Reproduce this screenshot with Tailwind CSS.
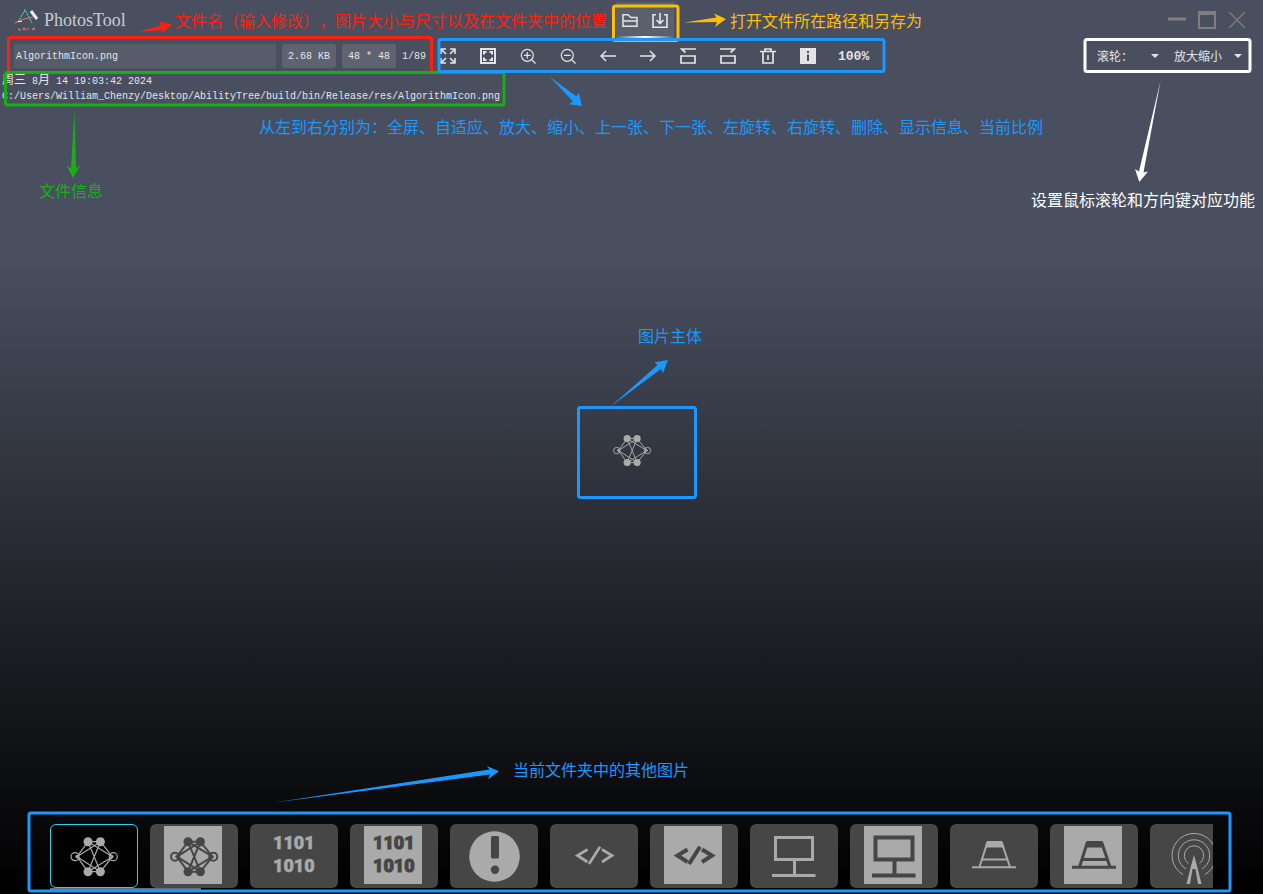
<!DOCTYPE html>
<html lang="zh-CN">
<head>
<meta charset="utf-8">
<meta name="viewport" content="width=device-width, initial-scale=1">
<title>PhotosTool</title>
<script src="https://cdn.jsdelivr.net/npm/@tailwindcss/browser@4"></script>
</head>
<body class="relative flex min-h-screen flex-col overflow-hidden bg-linear-to-b/srgb from-[#494f5f] from-29% via-[#1a1b20] via-75% to-black to-100% font-['Liberation_Mono','Noto_Sans_CJK_SC',monospace] text-[10px] text-[#e4e4e4]">

<svg class="hidden" aria-hidden="true">
  <defs>
    <g id="network">
      <g fill="none" stroke="currentColor">
        <path d="M13 30.7 24 15.7 36.4 45.7M13 30.7 36.4 15.7 24 45.7ZM13 30.7 36.4 45.7 48.5 30.7 36.4 15.7M48.5 30.7 24 15.7H36.4M48.5 30.7 24 45.7H36.4"/>
        <circle cx="11" cy="30.7" r="4"/><circle cx="49.3" cy="30.7" r="4"/>
      </g>
      <g fill="currentColor" stroke="none"><circle cx="24" cy="15.7" r="4.5"/><circle cx="36.4" cy="15.7" r="4.5"/><circle cx="24" cy="45.7" r="4.5"/><circle cx="36.4" cy="45.7" r="4.5"/><circle cx="13" cy="30.7" r="1.6"/><circle cx="48" cy="30.7" r="1.6"/></g>
    </g>
    <g id="code" fill="none" stroke="currentColor"><path d="M23.5 23.5 13.5 29.5 23.5 36M36 20.7 25 38M38 23.5 48 29.5 38 36"/></g>
    <g id="monitor" fill="none" stroke="currentColor"><path d="M11.5 11.5H48.5V33.5H11.5ZM30.5 34V49M8 49.5H51.5"/></g>
    <g id="track" fill="none" stroke="currentColor"><path d="M23.5 16 15.5 41M37.5 16 46 41M18 33.5H43.5M8 41.3H52"/><path fill="currentColor" stroke="none" d="M23 15H38L40.5 21.5H21Z"/></g>
  </defs>
</svg>

<header class="flex h-10 shrink-0 items-center">
  <div class="flex w-[616px] items-center gap-[5px] pl-[15px]">
    <svg class="h-6 w-6" viewBox="0 0 24 24" fill="none" aria-hidden="true">
      <path d="M3 14 10 2 17 15" stroke="#45d0b8" stroke-width="1.2" stroke-dasharray="2 1"/>
      <path d="M0 15 9 11 18 9" stroke="#e86a6a" stroke-width="1.2"/>
      <path d="M16 3 22 11" stroke="#ececec" stroke-width="3"/>
      <path d="M3 13.5H7" stroke="#ececec"/>
      <path d="M4 20V22H6M8 22 9 20 11 22M13 20V22M17 22 19 20 20 22" stroke="#e86a6a" stroke-width="1.2"/>
    </svg>
    <h1 class="font-['Liberation_Serif',serif] text-lg text-[#c9cbd0]">PhotosTool</h1>
  </div>
  <div class="relative flex h-9 w-[58px] items-center gap-[14px] bg-[#5b606e] px-[6px] pt-[2px]">
    <button aria-label="打开文件所在路径"><svg class="h-4 w-4" viewBox="0 0 16 16" fill="none" stroke="#e4e4e4" stroke-width="1.5"><path d="M1 13.3V1.8H6L9 4.5H15V13.3ZM1 8H15"/></svg></button>
    <button aria-label="另存为"><svg class="h-4 w-4" viewBox="0 0 16 16" fill="none" stroke="#e4e4e4" stroke-width="1.6"><path d="M4 1.8H1V14.2H15V1.8H12M8 0V10M4.5 7 8 10.5 11.5 7"/></svg></button>
    <div class="absolute inset-x-0 bottom-0 h-[2px] bg-linear-to-r from-transparent via-white to-transparent"></div>
  </div>
  <div class="ml-auto flex pr-[11px] text-[#807f7d]">
    <button class="grid w-[30px] place-items-center" aria-label="最小化"><svg class="h-[18px] w-[18px]" viewBox="0 0 18 18" stroke="currentColor" stroke-width="3"><path d="M0 8H18"/></svg></button>
    <button class="grid w-[30px] place-items-center" aria-label="最大化"><svg class="h-[18px] w-[18px]" viewBox="0 0 18 18" fill="none" stroke="currentColor" stroke-width="2"><path d="M1 1H17V17H1ZM1 3H17"/></svg></button>
    <button class="grid w-[30px] place-items-center" aria-label="关闭"><svg class="h-[18px] w-[18px]" viewBox="0 0 18 18" stroke="currentColor" stroke-width="1.3"><path d="M1 1 17 17M17 1 1 17"/></svg></button>
  </div>
</header>

<div class="flex h-8 shrink-0 items-center pl-[14px]">
  <div class="flex w-[414px] items-center gap-[6px]">
    <input class="h-6 w-[262px] bg-[#575c6a] px-[2px] text-[10px] outline-none" aria-label="文件名" value="AlgorithmIcon.png">
    <span class="grid h-6 w-[54px] place-items-center rounded-[3px] bg-[#5f6371]">2.68 KB</span>
    <span class="grid h-6 w-[54px] place-items-center rounded-[3px] bg-[#5f6371]">48 * 48</span>
    <span>1/89</span>
  </div>
  <nav class="flex items-center">
    <button class="grid w-10 place-items-center" aria-label="全屏"><svg class="h-4 w-4" viewBox="0 0 16 16" fill="none" stroke="currentColor" stroke-width="1.6"><path d="M1 6V1H6M10 1H15V6M15 10V15H10M6 15H1V10M1 1 6 6M15 1 10 6M15 15 10 10M1 15 6 10"/></svg></button>
    <button class="grid w-10 place-items-center" aria-label="自适应"><svg class="h-4 w-4" viewBox="0 0 16 16" fill="none" stroke="currentColor" stroke-width="2"><path d="M1 1H15V15H1ZM4 6.5V4H6.5M9.5 4H12V6.5M12 9.5V12H9.5M6.5 12H4V9.5"/></svg></button>
    <button class="grid w-10 place-items-center" aria-label="放大"><svg class="h-4 w-4" viewBox="0 0 16 16" fill="none" stroke="currentColor" stroke-width="1.2"><circle cx="7.3" cy="7.3" r="6"/><path d="M4 7.3H10.6M7.3 4V10.6M11.5 11.5 15.5 15.5"/></svg></button>
    <button class="grid w-10 place-items-center" aria-label="缩小"><svg class="h-4 w-4" viewBox="0 0 16 16" fill="none" stroke="currentColor" stroke-width="1.2"><circle cx="7.3" cy="7.3" r="6"/><path d="M4 7.3H10.6M11.5 11.5 15.5 15.5"/></svg></button>
    <button class="grid w-10 place-items-center" aria-label="上一张"><svg class="h-4 w-4" viewBox="0 0 16 16" fill="none" stroke="currentColor" stroke-width="1.5"><path d="M16 8H1M6 3 1 8 6 13"/></svg></button>
    <button class="grid w-10 place-items-center" aria-label="下一张"><svg class="h-4 w-4" viewBox="0 0 16 16" fill="none" stroke="currentColor" stroke-width="1.5"><path d="M0 8H15M10 3 15 8 10 13"/></svg></button>
    <button class="grid w-10 place-items-center" aria-label="左旋转"><svg class="h-4 w-4" viewBox="0 0 16 16" fill="none" stroke="currentColor" stroke-width="1.7"><path d="M16 1H1.5L5.5 4.5M1 8H15V15H1Z"/></svg></button>
    <button class="grid w-10 place-items-center" aria-label="右旋转"><svg class="h-4 w-4" viewBox="0 0 16 16" fill="none" stroke="currentColor" stroke-width="1.7"><path d="M0 1H14.5L10.5 4.5M1 8H15V15H1Z"/></svg></button>
    <button class="grid w-10 place-items-center" aria-label="删除"><svg class="h-4 w-4" viewBox="0 0 16 16" fill="none" stroke="currentColor" stroke-width="1.7"><path d="M0 3.5H16M5 3V1H11V3M3 4V15H13V4M8 7V12"/></svg></button>
    <button class="grid w-10 place-items-center" aria-label="显示信息"><svg class="h-4 w-4" viewBox="0 0 16 16" fill="none"><path fill="currentColor" d="M0 0H16V16H0Z"/><path stroke="#494f5f" stroke-width="2" d="M8 3V5M8 6.5V13"/></svg></button>
    <span class="pt-[2px] pl-[10px] text-[13px] font-bold">100%</span>
  </nav>
  <div class="ml-auto flex items-center pr-[19px] font-['Noto_Sans_CJK_SC',sans-serif] text-xs">
    <label class="relative flex w-[77px] items-center"><select class="h-6 w-full appearance-none bg-transparent outline-none" aria-label="输入方式"><option>滚轮：</option></select><svg class="pointer-events-none absolute right-[15px] h-1 w-2" viewBox="0 0 8 4" fill="currentColor"><path d="M0 0H8L4 4Z"/></svg></label>
    <label class="relative flex w-[70px] items-center"><select class="h-6 w-full appearance-none bg-transparent outline-none" aria-label="对应功能"><option>放大缩小</option></select><svg class="pointer-events-none absolute right-[2px] h-1 w-2" viewBox="0 0 8 4" fill="currentColor"><path d="M0 0H8L4 4Z"/></svg></label>
  </div>
</div>

<main class="relative flex flex-1 items-center justify-center pt-1">
  <svg class="h-12 w-12 text-[#aaa]" viewBox="0 0 60 60" stroke-width="1.2" role="img" aria-label="AlgorithmIcon"><use href="#network"/></svg>
  <div class="absolute top-[2px] left-[2px] leading-[15px]">
    <p><span class="text-xs leading-[15px]">周三</span> 8<span class="text-xs leading-[15px]">月</span> 14 19:03:42 2024</p>
    <p>C:/Users/William_Chenzy/Desktop/AbilityTree/build/bin/Release/res/AlgorithmIcon.png</p>
  </div>
</main>

<footer class="relative shrink-0 px-[50px] pb-[6px]">
  <div class="flex gap-3 overflow-hidden text-[#aaa] *:grid *:h-16 *:w-[88px] *:shrink-0 *:place-items-center *:rounded-md">
    <button class="border border-[#1fd8f0] bg-black/60" aria-label="图片 1"><svg class="h-[60px] w-[60px]" viewBox="0 0 60 60" stroke-width="1.2"><use href="#network"/></svg></button>
    <button class="bg-[#464646]" aria-label="图片 2"><svg class="h-[60px] w-[60px] text-[#464646]" viewBox="0 0 60 60" stroke-width="2"><path fill="#aaa" stroke="none" d="M0 0H58V58H0Z"/><use href="#network"/></svg></button>
    <button class="bg-[#464646]" aria-label="图片 3"><svg class="h-[60px] w-[60px] font-['Roboto',sans-serif] text-[18px] font-black" viewBox="0 0 60 60" fill="currentColor" stroke="currentColor" stroke-width=".5" stroke-linejoin="round"><text x="9" y="23">1101</text><text x="9" y="46">1010</text></svg></button>
    <button class="bg-[#464646]" aria-label="图片 4"><svg class="h-[60px] w-[60px] font-['Roboto',sans-serif] text-[18px] font-black text-[#464646]" viewBox="0 0 60 60" fill="currentColor" stroke="currentColor" stroke-linejoin="round"><path fill="#aaa" stroke="none" d="M0 0H58V58H0Z"/><text x="9" y="23">1101</text><text x="9" y="46">1010</text></svg></button>
    <button class="bg-[#464646]" aria-label="图片 5"><svg class="h-[60px] w-[60px]" viewBox="0 0 60 60"><circle cx="30.5" cy="30.5" r="25.3" fill="currentColor"/><rect x="27" y="10" width="8" height="22.5" rx="1.5" fill="#464646"/><circle cx="31" cy="43.8" r="4.2" fill="#464646"/></svg></button>
    <button class="bg-[#464646]" aria-label="图片 6"><svg class="h-[60px] w-[60px]" viewBox="0 0 60 60" stroke-width="2.7"><use href="#code"/></svg></button>
    <button class="bg-[#464646]" aria-label="图片 7"><svg class="h-[60px] w-[60px] text-[#464646]" viewBox="0 0 60 60" stroke-width="4"><path fill="#aaa" stroke="none" d="M0 0H58V58H0Z"/><use href="#code"/></svg></button>
    <button class="bg-[#464646]" aria-label="图片 8"><svg class="h-[60px] w-[60px]" viewBox="0 0 60 60" stroke-width="3"><use href="#monitor"/></svg></button>
    <button class="bg-[#464646]" aria-label="图片 9"><svg class="h-[60px] w-[60px] text-[#464646]" viewBox="0 0 60 60" stroke-width="4"><path fill="#aaa" stroke="none" d="M0 0H58V58H0Z"/><use href="#monitor"/></svg></button>
    <button class="bg-[#464646]" aria-label="图片 10"><svg class="h-[60px] w-[60px]" viewBox="0 0 60 60" stroke-width="2"><use href="#track"/></svg></button>
    <button class="bg-[#464646]" aria-label="图片 11"><svg class="h-[60px] w-[60px] text-[#464646]" viewBox="0 0 60 60" stroke-width="3"><path fill="#aaa" stroke="none" d="M0 0H58V58H0Z"/><use href="#track"/></svg></button>
    <button class="bg-[#464646]" aria-label="图片 12"><svg class="h-[60px] w-[60px]" viewBox="0 0 60 60" fill="none" stroke="currentColor"><path d="M19 48.5A22 22 0 1 1 41 48.5M22 43A15.7 15.7 0 1 1 38 43M24.5 37.5A9.7 9.7 0 1 1 35.5 37.5"/><path fill="currentColor" stroke="none" d="M30 29 33 40 37.5 58H34L31.5 43H28.5L26 58H22.5L27 40Z"/></svg></button>
  </div>
  <div class="absolute bottom-[4px] left-[50px] h-[2px] w-[151px] bg-[#6b6f7c]"></div>
</footer>

<!-- Guide layer: frames, arrows and captions over the window -->
<div class="pointer-events-none absolute inset-0 font-['Noto_Sans_CJK_SC',sans-serif] text-base leading-6 whitespace-nowrap [text-spacing-trim:space-all]">
  <svg class="absolute top-0 left-0 h-[894px] w-[1263px]" viewBox="0 0 1263 894" fill="none" stroke-width="3" aria-hidden="true">
    <rect x="8.5" y="37.5" width="423" height="35" rx="2" stroke="#ff2010"/>
    <rect x="5.5" y="72.5" width="498.5" height="32.5" rx="2" stroke="#1aad19"/>
    <rect x="613.5" y="6" width="64.5" height="34.5" rx="2" stroke="#ffbe00"/>
    <rect x="439" y="39.5" width="445" height="32" rx="2" stroke="#1a98ff"/>
    <rect x="1085" y="39.5" width="165" height="32" rx="2" stroke="#fff"/>
    <rect x="578.5" y="407.5" width="117" height="90" rx="2" stroke="#1a98ff"/>
    <rect x="29" y="813" width="1201" height="78" rx="2" stroke="#1a98ff"/>
    <path fill="#ff2010" d="M138 32 161 25.5 159 21.5 172 24.5 162.5 33 162.5 30Z"/>
    <path fill="#1aad19" d="M74.5 110 76 168 80 166 73 178 66.7 166 71 168Z"/>
    <path fill="#ffbe00" d="M684 22.5 716.5 17.5 714 13.5 726 19 715 27 717 22Z"/>
    <path fill="#fff" d="M1160.7 80 1143.5 172.5 1148 171.5 1139.3 182 1135 169 1139 171.5Z"/>
    <g fill="#1a98ff">
      <path d="M549.5 76.5 576.5 96.5 578.7 92.7 582 106 569 104.3 573 101.5Z"/>
      <path d="M610.7 406.5 657.5 365 654.7 362.3 668 360 663 373 661 369Z"/>
      <path d="M273 802.7 489.5 769.5 486.7 766 499 771.3 488 779.3 490 774.5Z"/>
    </g>
  </svg>
  <p class="absolute top-[8px] left-[175px] text-[#ff2010]">文件名（输入修改），图片大小与尺寸以及在文件夹中的位置</p>
  <p class="absolute top-[8px] left-[730px] text-[#ffbe00]">打开文件所在路径和另存为</p>
  <p class="absolute top-[114px] left-[259px] text-[#1a98ff]">从左到右分别为：全屏、自适应、放大、缩小、上一张、下一张、左旋转、右旋转、删除、显示信息、当前比例</p>
  <p class="absolute top-[178px] left-[39px] text-[#1aad19]">文件信息</p>
  <p class="absolute top-[187px] left-[1031px] text-white">设置鼠标滚轮和方向键对应功能</p>
  <p class="absolute top-[323px] left-[638px] text-[#1a98ff]">图片主体</p>
  <p class="absolute top-[757px] left-[513px] text-[#1a98ff]">当前文件夹中的其他图片</p>
</div>
</body>
</html>
